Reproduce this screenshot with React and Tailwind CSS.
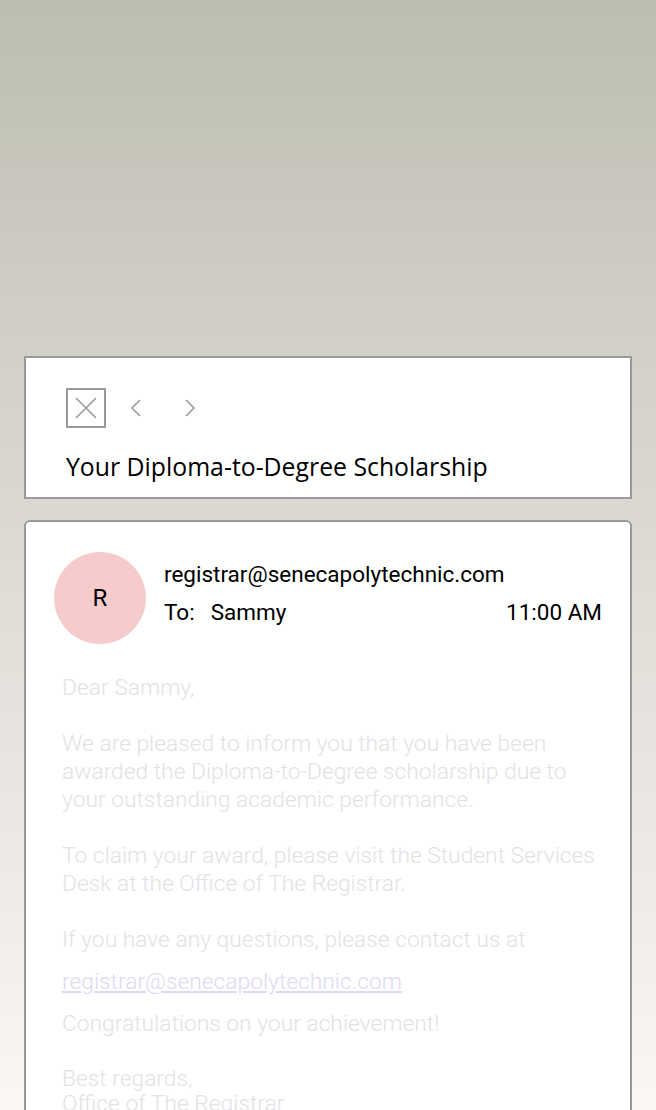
import React from 'react';

const Chevron = ({ dir }) => (
  <svg width="16" height="20" viewBox="0 0 16 20" fill="none" stroke="#9a9a9a" strokeWidth="1.6">
    {dir === 'left' ? <path d="M12 2 L4 10 L12 18" /> : <path d="M4 2 L12 10 L4 18" />}
  </svg>
);

export default function App() {
  const body = 'text-[#e2e2e6]';
  return (
    <div className="h-[1110px] overflow-hidden bg-gradient-to-b from-[#bdbdb1] via-[#d5d2ca] via-[35%] to-[#fcf6f5] px-6 pt-[356px] font-['Roboto',sans-serif]">
      <div className="h-[143px] border-2 border-[#9a9a9a] bg-white pl-10 pt-[30px]">
        <div className="flex items-center">
          <div className="flex h-10 w-10 items-center justify-center border-2 border-[#9a9a9a]">
            <svg width="24" height="24" viewBox="0 0 24 24" stroke="#9a9a9a" strokeWidth="1.6">
              <path d="M2 2 L22 22 M22 2 L2 22" />
            </svg>
          </div>
          <div className="ml-[22px]">
            <Chevron dir="left" />
          </div>
          <div className="ml-[38px]">
            <Chevron dir="right" />
          </div>
        </div>
        <div className="mt-[22px] font-['Open_Sans',sans-serif] text-[24.8px] leading-8 text-black">
          Your Diploma-to-Degree Scholarship
        </div>
      </div>

      <div className="mt-[21px] h-[700px] rounded-md border-2 border-[#9a9a9a] bg-white pl-[28px] pr-7 pt-[30px]">
        <div className="flex items-center">
          <div className="flex h-[92px] w-[92px] shrink-0 items-center justify-center rounded-full bg-[#f5cbcc] text-[24px] text-black">
            R
          </div>
          <div className="ml-[18px] flex-1 pb-[10px] text-[22.5px] text-black">
            <div className="leading-[34px]">registrar@senecapolytechnic.com</div>
            <div className="mt-[4px] flex justify-between leading-[34px]">
              <span>
                To:<span className="ml-4">Sammy</span>
              </span>
              <span>11:00 AM</span>
            </div>
          </div>
        </div>

        <div className={`mt-[30px] pl-[8px] text-[22.8px] font-light leading-7 ${body}`}>
          <p>Dear Sammy,</p>
          <p className="mt-7">
            We are pleased to inform you that you have been awarded the Diploma-to-Degree scholarship due to
            your outstanding academic performance.
          </p>
          <p className="mt-7">
            To claim your award, please visit the Student Services Desk at the Office of The Registrar.
          </p>
          <p className="mt-7">If you have any questions, please contact us at</p>
          <p className="mt-[14px]">
            <a className="text-[#dadaf4] underline">registrar@senecapolytechnic.com</a>
          </p>
          <p className="mt-[14px]">Congratulations on your achievement!</p>
          <p className="mt-7 leading-[25px]">
            Best regards,
            <br />
            Office of The Registrar
          </p>
        </div>
      </div>
    </div>
  );
}
